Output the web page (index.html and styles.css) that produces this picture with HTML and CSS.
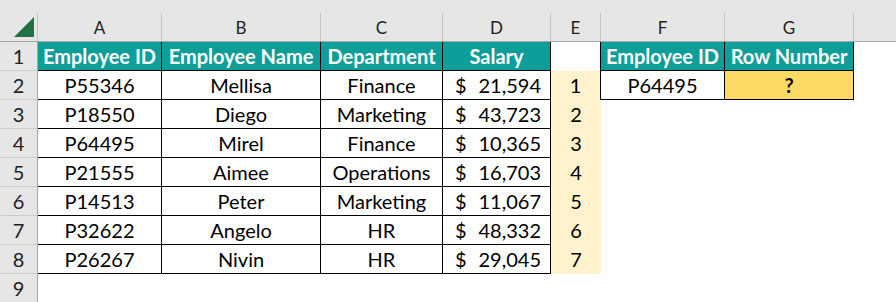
FILE: index.html
```html
<!DOCTYPE html>
<html lang="en">
<head>
    <meta charset="UTF-8">
    <title>Employee Row Number</title>
    <link rel="stylesheet" href="styles.css">
</head>
<body>
    <div class="sheet">
        <div class="colhead">
            <div class="corner">
                <svg width="37" height="28" viewBox="0 0 37 28"><polygon points="14,24 34,24 34,4" fill="#217346"/></svg>
            </div>
            <div class="letter">A</div>
            <div class="letter">B</div>
            <div class="letter">C</div>
            <div class="letter">D</div>
            <div class="letter">E</div>
            <div class="letter">F</div>
            <div class="letter">G</div>
            <div class="letter last"></div>
        </div>

        <div class="row">
            <div class="rh">1</div>
            <div class="b th">Employee ID</div>
            <div class="b th">Employee Name</div>
            <div class="b th">Department</div>
            <div class="b th">Salary</div>
            <div class="c edge"></div>
            <div class="b th">Employee ID</div>
            <div class="b th">Row Number</div>
            <div class="c"></div>
        </div>
        <div class="row">
            <div class="rh">2</div>
            <div class="b">P55346</div>
            <div class="b">Mellisa</div>
            <div class="b">Finance</div>
            <div class="b money"><span>$</span><span>21,594</span></div>
            <div class="c idx edge">1</div>
            <div class="b">P64495</div>
            <div class="b ask">?</div>
            <div class="c"></div>
        </div>
        <div class="row">
            <div class="rh">3</div>
            <div class="b">P18550</div>
            <div class="b">Diego</div>
            <div class="b">Marketing</div>
            <div class="b money"><span>$</span><span>43,723</span></div>
            <div class="c idx">2</div>
            <div class="c"></div>
            <div class="c"></div>
            <div class="c"></div>
        </div>
        <div class="row">
            <div class="rh">4</div>
            <div class="b">P64495</div>
            <div class="b">Mirel</div>
            <div class="b">Finance</div>
            <div class="b money"><span>$</span><span>10,365</span></div>
            <div class="c idx">3</div>
            <div class="c"></div>
            <div class="c"></div>
            <div class="c"></div>
        </div>
        <div class="row">
            <div class="rh">5</div>
            <div class="b">P21555</div>
            <div class="b">Aimee</div>
            <div class="b">Operations</div>
            <div class="b money"><span>$</span><span>16,703</span></div>
            <div class="c idx">4</div>
            <div class="c"></div>
            <div class="c"></div>
            <div class="c"></div>
        </div>
        <div class="row">
            <div class="rh">6</div>
            <div class="b">P14513</div>
            <div class="b">Peter</div>
            <div class="b">Marketing</div>
            <div class="b money"><span>$</span><span>11,067</span></div>
            <div class="c idx">5</div>
            <div class="c"></div>
            <div class="c"></div>
            <div class="c"></div>
        </div>
        <div class="row">
            <div class="rh">7</div>
            <div class="b">P32622</div>
            <div class="b">Angelo</div>
            <div class="b">HR</div>
            <div class="b money"><span>$</span><span>48,332</span></div>
            <div class="c idx">6</div>
            <div class="c"></div>
            <div class="c"></div>
            <div class="c"></div>
        </div>
        <div class="row">
            <div class="rh">8</div>
            <div class="b">P26267</div>
            <div class="b">Nivin</div>
            <div class="b">HR</div>
            <div class="b money"><span>$</span><span>29,045</span></div>
            <div class="c idx">7</div>
            <div class="c"></div>
            <div class="c"></div>
            <div class="c"></div>
        </div>
        <div class="row short">
            <div class="rh">9</div>
            <div class="c"></div>
            <div class="c"></div>
            <div class="c"></div>
            <div class="c"></div>
            <div class="c"></div>
            <div class="c"></div>
            <div class="c"></div>
            <div class="c"></div>
        </div>
    </div>
</body>
</html>
```

FILE: styles.css
```css
* {
    box-sizing: border-box;
}
body {
    margin: 0;
    background: #fff;
    font-family: 'Lato', 'Carlito', sans-serif;
    color: #000;
}
.sheet {
    width: 896px;
    height: 302px;
    overflow: hidden;
}
.colhead, .row {
    display: grid;
    grid-template-columns: 38px 124px 159px 122px 108px 50px 124px 129px 42px;
}
.colhead {
    background: #e6e6e6;
    padding-top: 13px;
    border-bottom: 1px solid #a8a8a8;
    height: 42px;
}
.colhead > div {
    height: 28px;
    border-right: 1px solid #c4c4c4;
}
.corner svg {
    display: block;
}
.letter {
    text-align: center;
    font-size: 17px;
    line-height: 30px;
    color: #222;
}
.colhead .last {
    border-right: none;
}
.row {
    height: 29px;
}
.row.short {
    height: 28px;
}
.row > div {
    font-size: 20px;
    line-height: 28px;
    text-align: center;
    white-space: nowrap;
}
.rh {
    background: #e6e6e6;
    border-right: 1px solid #a8a8a8;
    border-bottom: 1px solid #cccccc;
    color: #222;
}
.b {
    border-right: 1px solid #000;
    border-bottom: 1px solid #000;
}
.th {
    background: #0e9e99;
    color: #fff;
    font-weight: 700;
}
.edge {
    border-right: 1px solid #000;
}
.idx {
    background: #fff2cc;
}
.ask {
    background: #ffd966;
    font-weight: 700;
}
.money {
    display: flex;
    justify-content: space-between;
    padding: 0 9px 0 12px;
}
```
